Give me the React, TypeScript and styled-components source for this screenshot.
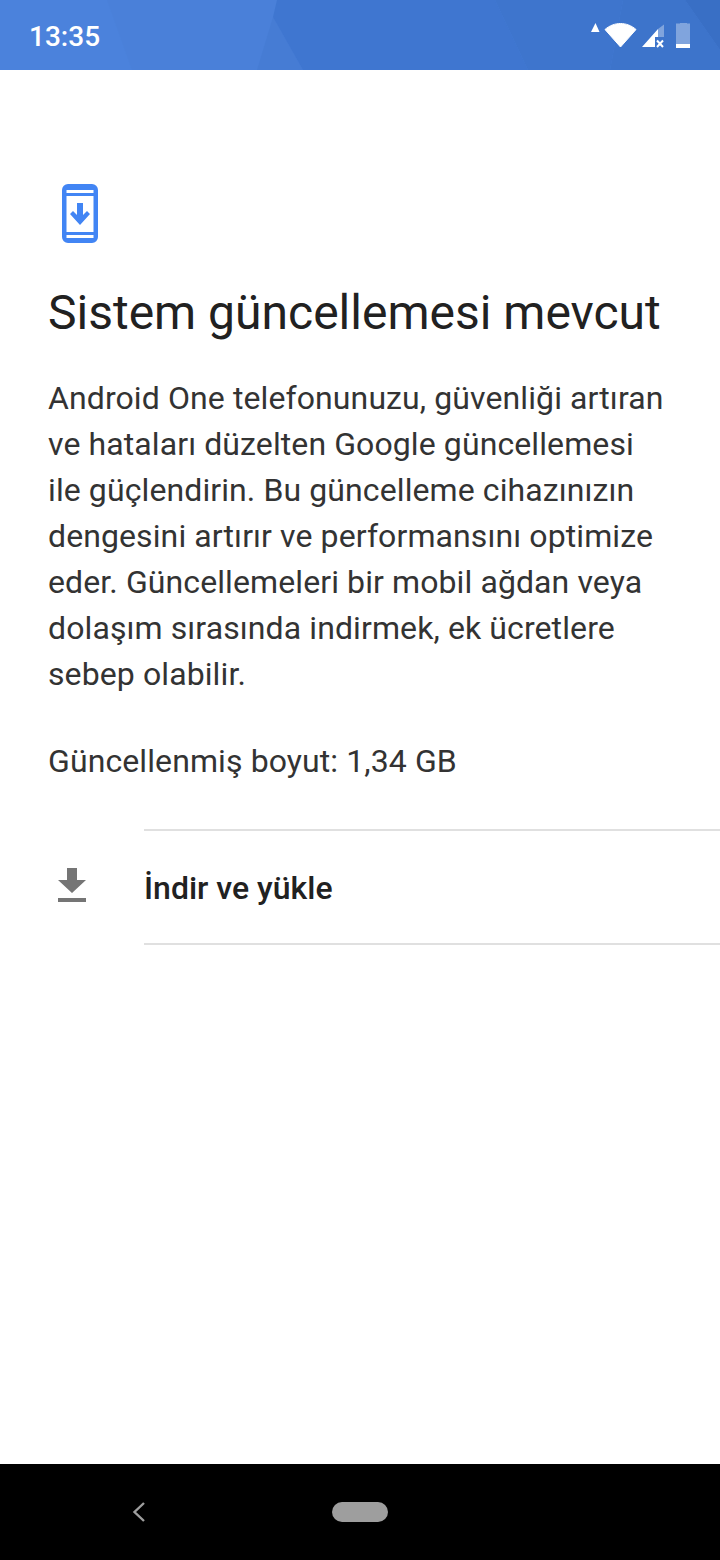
import React from "react";
import styled, { createGlobalStyle } from "styled-components";

const Global = createGlobalStyle`
  html, body { margin: 0; padding: 0; background: #fff; }
  #root { width: 720px; height: 1560px; }
  * { box-sizing: border-box; }
`;

const Screen = styled.div`
  width: 720px;
  height: 1560px;
  display: flex;
  flex-direction: column;
  font-family: Roboto, "Noto Sans", sans-serif;
  background: #fff;
  color: #212121;
`;

const StatusBar = styled.header`
  position: relative;
  flex: 0 0 70px;
  height: 70px;
  display: flex;
  align-items: center;
  justify-content: space-between;
  padding: 0 28px 0 29px;
  overflow: hidden;
  background: #4a80d9;
`;

const Wallpaper = styled.svg`
  position: absolute;
  inset: 0;
`;

const Clock = styled.span`
  position: relative;
  top: 2px;
  font-size: 28px;
  font-weight: 500;
  line-height: 70px;
  color: #fff;
`;

const StatusIcons = styled.svg`
  position: relative;
`;

const Main = styled.main`
  flex: 1;
  display: flex;
  flex-direction: column;
  padding-top: 114px;
`;

const Intro = styled.section`
  padding: 0 48px;
  display: flex;
  flex-direction: column;
`;

const UpdateIcon = styled.svg`
  display: block;
  margin-left: 14px;
`;

const Title = styled.h1`
  margin: 40px 0 0;
  font-size: 48px;
  font-weight: 400;
  line-height: 60px;
  white-space: nowrap;
`;

const Body = styled.p`
  margin: 32px 0 0;
  font-size: 32px;
  line-height: 46px;
  letter-spacing: 0.1px;
  color: #333;
  white-space: nowrap;
`;

const Size = styled(Body)`
  margin-top: 41px;
`;

const ActionRow = styled.div`
  margin-top: 45px;
  display: grid;
  grid-template-columns: 144px 1fr;
  align-items: center;
`;

const ActionIconCell = styled.div`
  padding: 0 0 2px 54px;
  display: flex;
`;

const ActionLabel = styled.div`
  height: 116px;
  padding-top: 2px;
  border-top: 2px solid #e0e0e0;
  border-bottom: 2px solid #e0e0e0;
  display: flex;
  align-items: center;
  font-size: 32px;
  font-weight: 500;
  color: #212121;
`;

const NavBar = styled.nav`
  flex: 0 0 96px;
  height: 96px;
  background: #000;
  display: flex;
  align-items: center;
  position: relative;
  padding-left: 132px;
`;

const Back = styled.svg`
  display: block;
`;

const Home = styled.div`
  width: 56px;
  height: 20px;
  border-radius: 10px;
  background: #9e9e9e;
  margin-left: 186px;
`;

export default function App() {
  return (
    <Screen>
      <Global />
      <StatusBar>
        <Wallpaper width="720" height="70" viewBox="0 0 720 70">
          <polygon points="0,0 107,0 132,70 0,70" fill="#4b82dc" />
          <polygon points="273,17 303,70 257,70" fill="#467cd4" />
          <polygon points="277,0 495,0 528,70 303,70 273,17" fill="#3f76d0" />
          <polygon points="495,0 623,0 610,70 528,70" fill="#3e75cd" />
          <polygon points="623,0 685,0 720,50 720,70 610,70" fill="#3d74cb" />
          <polygon points="685,0 720,0 720,50" fill="#396fc5" />
        </Wallpaper>
        <Clock>13:35</Clock>
        <StatusIcons width="106" height="30" viewBox="0 0 106 30">
          <polygon points="5,12 9.5,3 13.5,12" fill="#fff" />
          <path d="M19 9.5 C28 1.5 41 1.5 50 9.5 L34.5 27 Z" fill="#fff" stroke="#fff" strokeWidth="1" strokeLinejoin="round" />
          <polygon points="56,27 72,9 72,17 69,17 69,27" fill="#fff" />
          <polygon points="72,9 78,4.5 78,17 72,17" fill="#fff" fillOpacity="0.35" />
          <path d="M71 20.5 L77 27 M77 20.5 L71 27" stroke="#fff" strokeWidth="2" />
          <path d="M94 3.5 V3 H101 V3.5 H104 V28 H90 V3.5 Z" fill="#fff" fillOpacity="0.35" />
          <rect x="90" y="24" width="14" height="4" fill="#fff" />
        </StatusIcons>
      </StatusBar>
      <Main>
        <Intro>
          <UpdateIcon width="36" height="59" viewBox="0 0 36 59">
            <path fillRule="evenodd" d="M6 0 H30 A6 6 0 0 1 36 6 V53 A6 6 0 0 1 30 59 H6 A6 6 0 0 1 0 53 V6 A6 6 0 0 1 6 0 Z M4.5 6 V9 H31.5 V6 Z M4.5 12 V48 H31.5 V12 Z M4.5 51 V54 H31.5 V51 Z" fill="#4285f4" />
            <path d="M15 19 H21 V31 L25 27 L28 30 L18 41 L8 30 L11 27 L15 31 Z" fill="#4285f4" />
          </UpdateIcon>
          <Title>Sistem güncellemesi mevcut</Title>
          <Body>
            Android One telefonunuzu, güvenliği artıran<br />
            ve hataları düzelten Google güncellemesi<br />
            ile güçlendirin. Bu güncelleme cihazınızın<br />
            dengesini artırır ve performansını optimize<br />
            eder. Güncellemeleri bir mobil ağdan veya<br />
            dolaşım sırasında indirmek, ek ücretlere<br />
            sebep olabilir.
          </Body>
          <Size>Güncellenmiş boyut: 1,34 GB</Size>
        </Intro>
        <ActionRow>
          <ActionIconCell>
            <svg width="36" height="36" viewBox="0 0 36 36">
              <path d="M13 0 H23 V12 H32 L18 25 L4 12 H13 Z M4 30 H32 V34 H4 Z" fill="#757575" />
            </svg>
          </ActionIconCell>
          <ActionLabel>İndir ve yükle</ActionLabel>
        </ActionRow>
      </Main>
      <NavBar>
        <Back width="14" height="20" viewBox="0 0 14 20">
          <path d="M12 1 L2.5 10 L12 19" fill="none" stroke="#9e9e9e" strokeWidth="2.4" />
        </Back>
        <Home />
      </NavBar>
    </Screen>
  );
}
